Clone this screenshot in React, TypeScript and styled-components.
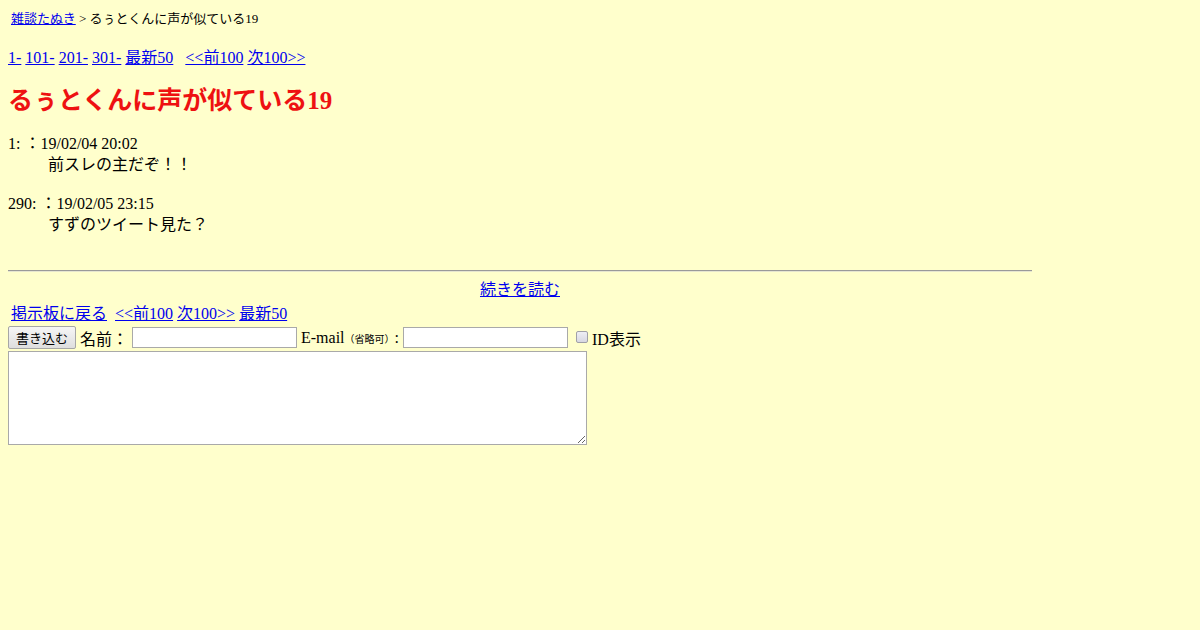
import React from 'react'
import styled, { createGlobalStyle } from 'styled-components'

const GlobalStyle = createGlobalStyle`
body {
  margin: 8px;
  background: #ffffcc;
  color: #000;
  font-family: "Liberation Serif", "Noto Sans CJK JP", serif;
  font-size: 16px;
}
a { color: #0000ee; }
`

interface iPost {
  no: number
  date: string
  body: string
}

const posts: iPost[] = [
  { no: 1, date: '19/02/04 20:02', body: '前スレの主だぞ！！' },
  { no: 290, date: '19/02/05 23:15', body: 'すずのツイート見た？' },
]

const title = 'るぅとくんに声が似ている19'

const Post: React.FC<iPost> = ({ no, date, body }) => {
  return (
    <PostItem>
      <PostHead>{no}: ：{date}</PostHead>
      <PostBody>{body}</PostBody>
    </PostItem>
  )
}

const App = () => {
  return (
    <Page>
      <GlobalStyle />
      <Crumb>
        <a href="#">雑談たぬき</a> &gt; {title}
      </Crumb>

      <Nav>
        <a href="#">1-</a> <a href="#">101-</a> <a href="#">201-</a> <a href="#">301-</a>{' '}
        <a href="#">最新50</a>&nbsp;&nbsp; <a href="#">&lt;&lt;前100</a> <a href="#">次100&gt;&gt;</a>
      </Nav>

      <Title>{title}</Title>

      <Posts>
        {posts.map((p) => (
          <Post key={p.no} {...p} />
        ))}
      </Posts>

      <Rule />
      <More>
        <a href="#">続きを読む</a>
      </More>

      <Footer>
        <a href="#">掲示板に戻る</a>&nbsp; <a href="#">&lt;&lt;前100</a> <a href="#">次100&gt;&gt;</a>{' '}
        <a href="#">最新50</a>
      </Footer>

      <Form>
        <FormRow>
          <Submit type="button">書き込む</Submit>
          <Label>名前：</Label>
          <Field type="text" />
          <Label>
            E-mail<Small>（省略可）</Small>:
          </Label>
          <Field type="text" />
          <Check>
            <input type="checkbox" />
            ID表示
          </Check>
        </FormRow>
        <Message />
      </Form>
    </Page>
  )
}

export default App

const Page = styled.div`
width: 1024px;
`

const Crumb = styled.div`
padding-left: 3px;
font-size: 13px;
line-height: 22px;
`

const Nav = styled.div`
margin-top: 18px;
line-height: 20px;
`

const Title = styled.h1`
margin: 18px 0 0;
color: #ee1111;
font-size: 25px;
line-height: 30px;
font-weight: bold;
`

const Posts = styled.dl`
margin: 18px 0 0;
`

const PostItem = styled.div`
margin-bottom: 19px;
`

const PostHead = styled.dt`
line-height: 20px;
`

const PostBody = styled.dd`
margin-left: 40px;
line-height: 21px;
`

const Rule = styled.hr`
margin: 35px 0 0;
border: none;
border-top: 1px solid #9a9a9a;
border-bottom: 1px solid #e6e6d0;
`

const More = styled.div`
margin-top: 8px;
text-align: center;
line-height: 20px;
`

const Footer = styled.div`
margin-top: 4px;
padding-left: 3px;
line-height: 20px;
`

const Form = styled.form`
margin-top: 2px;
`

const FormRow = styled.div`
display: flex;
align-items: center;
height: 23px;
`

const Submit = styled.button`
width: 68px;
height: 23px;
padding: 0;
font-family: "Noto Sans CJK JP", sans-serif;
font-size: 13px;
color: #000;
background: linear-gradient(#f6f6f6, #dedede);
border: 1px solid #a6a6a6;
border-radius: 2px;
`

const Label = styled.span`
margin: 0 4px;
font-size: 16px;
`

const Small = styled.span`
font-size: 10px;
`

const Field = styled.input`
width: 165px;
height: 21px;
box-sizing: border-box;
border: 1px solid #a9a9a9;
background: #fff;
padding: 1px 2px;
`

const Check = styled.label`
display: flex;
align-items: center;
margin-left: 8px;
input {
  appearance: none;
  margin: -2px 4px 0 0;
  width: 12px;
  height: 12px;
  box-sizing: border-box;
  border: 1px solid #a0a0a8;
  border-radius: 2px;
  background: linear-gradient(#eeeef4, #d8d8e2);
}
`

const Message = styled.textarea`
display: block;
width: 579px;
height: 94px;
box-sizing: border-box;
border: 1px solid #a9a9a9;
background: #fff;
margin: 2px 0 0;
`
